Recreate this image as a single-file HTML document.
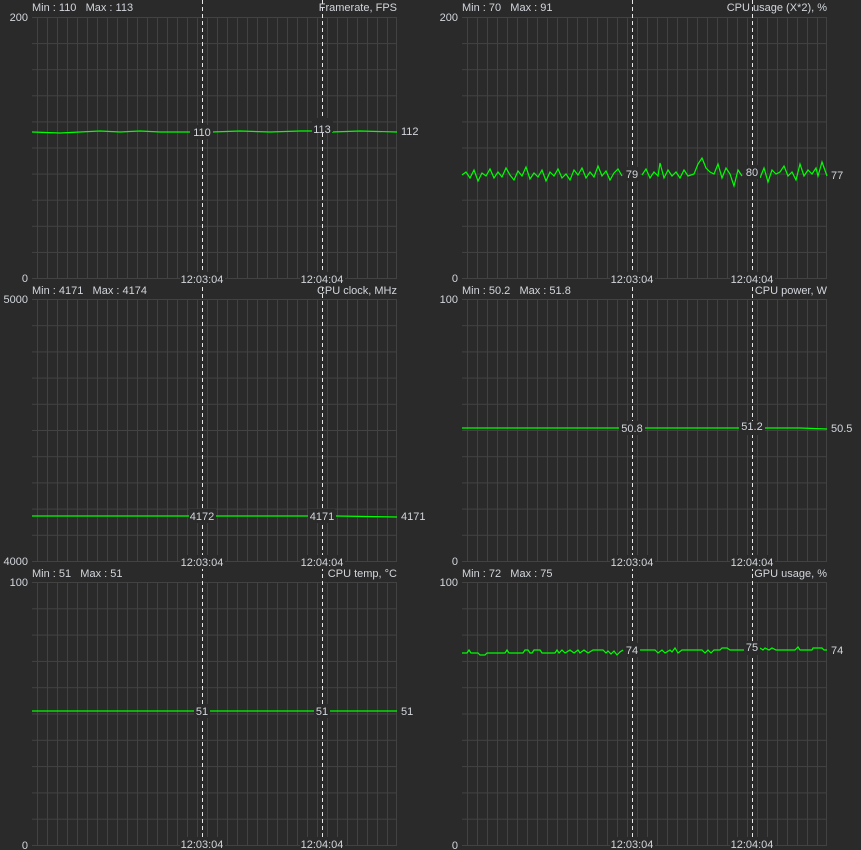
<!DOCTYPE html>
<html><head><meta charset="utf-8"><style>
html,body{margin:0;padding:0;background:#2a2a2a;}
svg{display:block}
text{font-family:"Liberation Sans",sans-serif;font-size:11px;fill:#d2d6dc;white-space:pre;}
.bg{fill:#2a2a2a}
</style></head><body>
<svg width="861" height="850" viewBox="0 0 861 850" xmlns="http://www.w3.org/2000/svg">
<defs>
<pattern id="p1" patternUnits="userSpaceOnUse" x="7" y="17" width="10" height="26.1"><path d="M0.5 0V26.1M0 0.5H10" stroke="#424242" stroke-width="1"/></pattern>
<pattern id="p2" patternUnits="userSpaceOnUse" x="7" y="299" width="10" height="26.2"><path d="M0.5 0V26.2M0 0.5H10" stroke="#424242" stroke-width="1"/></pattern>
<pattern id="p3" patternUnits="userSpaceOnUse" x="7" y="582" width="10" height="26.3"><path d="M0.5 0V26.3M0 0.5H10" stroke="#424242" stroke-width="1"/></pattern>
</defs>
<rect width="861" height="850" fill="#2a2a2a"/>
<rect x="32" y="17" width="365" height="262" fill="url(#p1)"/>
<rect x="462" y="17" width="365" height="262" fill="url(#p1)"/>
<rect x="32" y="299" width="365" height="263" fill="url(#p2)"/>
<rect x="462" y="299" width="365" height="263" fill="url(#p2)"/>
<rect x="32" y="582" width="365" height="264" fill="url(#p3)"/>
<rect x="462" y="582" width="365" height="264" fill="url(#p3)"/>
<g stroke="#424242">
<path d="M32 278.5H397M462 278.5H827M32 561.5H397M462 561.5H827M32 845.5H397M462 845.5H827M396.5 17V279M826.5 17V279M396.5 299V562M826.5 299V562M396.5 582V846M826.5 582V846"/>
</g>
<g stroke="#e8e8e8" stroke-dasharray="4,3" stroke-width="1">
<path d="M202.5 0V850M322.5 0V850M632.5 0V850M752.5 0V850"/>
</g>
<g fill="none" stroke="#00ff00" stroke-width="1.2">
<polyline points="32,132 60,133 80,132 100,131 120,132 140,131 160,132 190,132"/>
<polyline points="212,132 240,131 270,132 300,131 312,131"/>
<polyline points="332,132 360,131 397,132"/>
<polyline points="462,175 466,172 470,178 474,170 478,181 482,173 486,176 490,169 494,178 498,172 502,177 506,168 510,175 514,180 518,171 522,176 526,167 530,179 534,173 538,177 542,170 546,181 550,172 554,176 558,169 562,178 566,174 570,180 574,170 578,175 582,168 586,178 590,172 594,177 598,166 602,176 606,171 610,180 614,173 618,169 622,176"/>
<polyline points="642,175 646,169 650,178 654,172 658,176 660,163 664,178 668,170 672,176 676,172 680,178 684,170 688,176 694,174 698,164 702,158 706,168 710,172 714,174 718,164 722,178 726,168 730,174 734,186 738,170 742,176"/>
<polyline points="760,178 764,168 768,182 772,170 776,174 780,172 784,166 788,176 792,172 796,180 800,164 804,176 808,170 812,174 816,168 818,176 822,162 827,176"/>
<polyline points="32,516 190,516"/><polyline points="214,516 308,516"/><polyline points="336,516 397,517"/>
<polyline points="462,428 500,428 540,428 580,428 619,428"/><polyline points="645,428 700,428 739,428"/><polyline points="765,428 800,428 827,429"/>
<polyline points="32,711 194,711"/><polyline points="210,711 314,711"/><polyline points="330,711 397,711"/>
<polyline points="462,653 467,653 469,650 471,653 478,653 480,655 485,655 487,653 505,653 507,650 509,653 523,653 525,650 528,650 530,653 532,653 534,650 540,650 542,653 555,653 557,650 559,653 562,650 565,653 570,650 574,653 578,650 580,653 584,650 588,653 593,650 603,650 606,653 608,651 611,654 614,651 617,655 620,652 623,650"/>
<polyline points="640,650 655,650 658,653 662,650 665,653 670,650 672,652 675,648 678,653 682,650 702,650 705,653 708,650 711,653 714,650 720,650 722,648 727,648 730,650 744,650"/>
<polyline points="760,648 763,650 765,648 769,650 772,648 776,650 795,650 798,647 800,650 812,650 813,648 822,648 824,650 827,650"/>
</g>
<g class="bg">
<rect x="192" y="125" width="21" height="14"/><rect x="312" y="118" width="21" height="14"/>
<rect x="624" y="167" width="16" height="14"/><rect x="744" y="165" width="16" height="14"/>
<rect x="189" y="509" width="27" height="14"/><rect x="308" y="509" width="27" height="14"/>
<rect x="619" y="421" width="26" height="14"/><rect x="739" y="421" width="26" height="14"/>
<rect x="194" y="704" width="16" height="14"/><rect x="314" y="704" width="16" height="14"/>
<rect x="624" y="643" width="16" height="14"/><rect x="744" y="641" width="16" height="14"/>
<rect x="180" y="272" width="45" height="14"/><rect x="300" y="272" width="45" height="14"/>
<rect x="610" y="272" width="45" height="14"/><rect x="730" y="272" width="45" height="14"/>
<rect x="180" y="555" width="45" height="14"/><rect x="300" y="555" width="45" height="14"/>
<rect x="610" y="555" width="45" height="14"/><rect x="730" y="555" width="45" height="14"/>
<rect x="180" y="837" width="45" height="13"/><rect x="300" y="837" width="45" height="13"/>
<rect x="610" y="837" width="45" height="13"/><rect x="730" y="837" width="45" height="13"/>
</g>
<g>
<text x="32" y="11">Min : 110   Max : 113</text><text x="397" y="11" text-anchor="end">Framerate, FPS</text>
<text x="462" y="11">Min : 70   Max : 91</text><text x="827" y="11" text-anchor="end">CPU usage (X*2), %</text>
<text x="32" y="294">Min : 4171   Max : 4174</text><text x="397" y="294" text-anchor="end">CPU clock, MHz</text>
<text x="462" y="294">Min : 50.2   Max : 51.8</text><text x="827" y="294" text-anchor="end">CPU power, W</text>
<text x="32" y="577">Min : 51   Max : 51</text><text x="397" y="577" text-anchor="end">CPU temp, °C</text>
<text x="462" y="577">Min : 72   Max : 75</text><text x="827" y="577" text-anchor="end">GPU usage, %</text>

<text x="28" y="21" text-anchor="end">200</text><text x="28" y="282" text-anchor="end">0</text>
<text x="458" y="21" text-anchor="end">200</text><text x="458" y="282" text-anchor="end">0</text>
<text x="28" y="303" text-anchor="end">5000</text><text x="28" y="565" text-anchor="end">4000</text>
<text x="458" y="303" text-anchor="end">100</text><text x="458" y="565" text-anchor="end">0</text>
<text x="28" y="586" text-anchor="end">100</text><text x="28" y="849" text-anchor="end">0</text>
<text x="458" y="586" text-anchor="end">100</text><text x="458" y="849" text-anchor="end">0</text>

<g text-anchor="middle">
<text x="202" y="283">12:03:04</text><text x="322" y="283">12:04:04</text>
<text x="632" y="283">12:03:04</text><text x="752" y="283">12:04:04</text>
<text x="202" y="566">12:03:04</text><text x="322" y="566">12:04:04</text>
<text x="632" y="566">12:03:04</text><text x="752" y="566">12:04:04</text>
<text x="202" y="848">12:03:04</text><text x="322" y="848">12:04:04</text>
<text x="632" y="848">12:03:04</text><text x="752" y="848">12:04:04</text>
<text x="202" y="136">110</text><text x="322" y="133">113</text>
<text x="632" y="178">79</text><text x="752" y="176">80</text>
<text x="202" y="520">4172</text><text x="322" y="520">4171</text>
<text x="632" y="432">50.8</text><text x="752" y="430">51.2</text>
<text x="202" y="715">51</text><text x="322" y="715">51</text>
<text x="632" y="654">74</text><text x="752" y="651">75</text>
</g>
<text x="401" y="135">112</text><text x="831" y="179">77</text>
<text x="401" y="520">4171</text><text x="831" y="432">50.5</text>
<text x="401" y="715">51</text><text x="831" y="654">74</text>
</g>
</svg>
</body></html>
